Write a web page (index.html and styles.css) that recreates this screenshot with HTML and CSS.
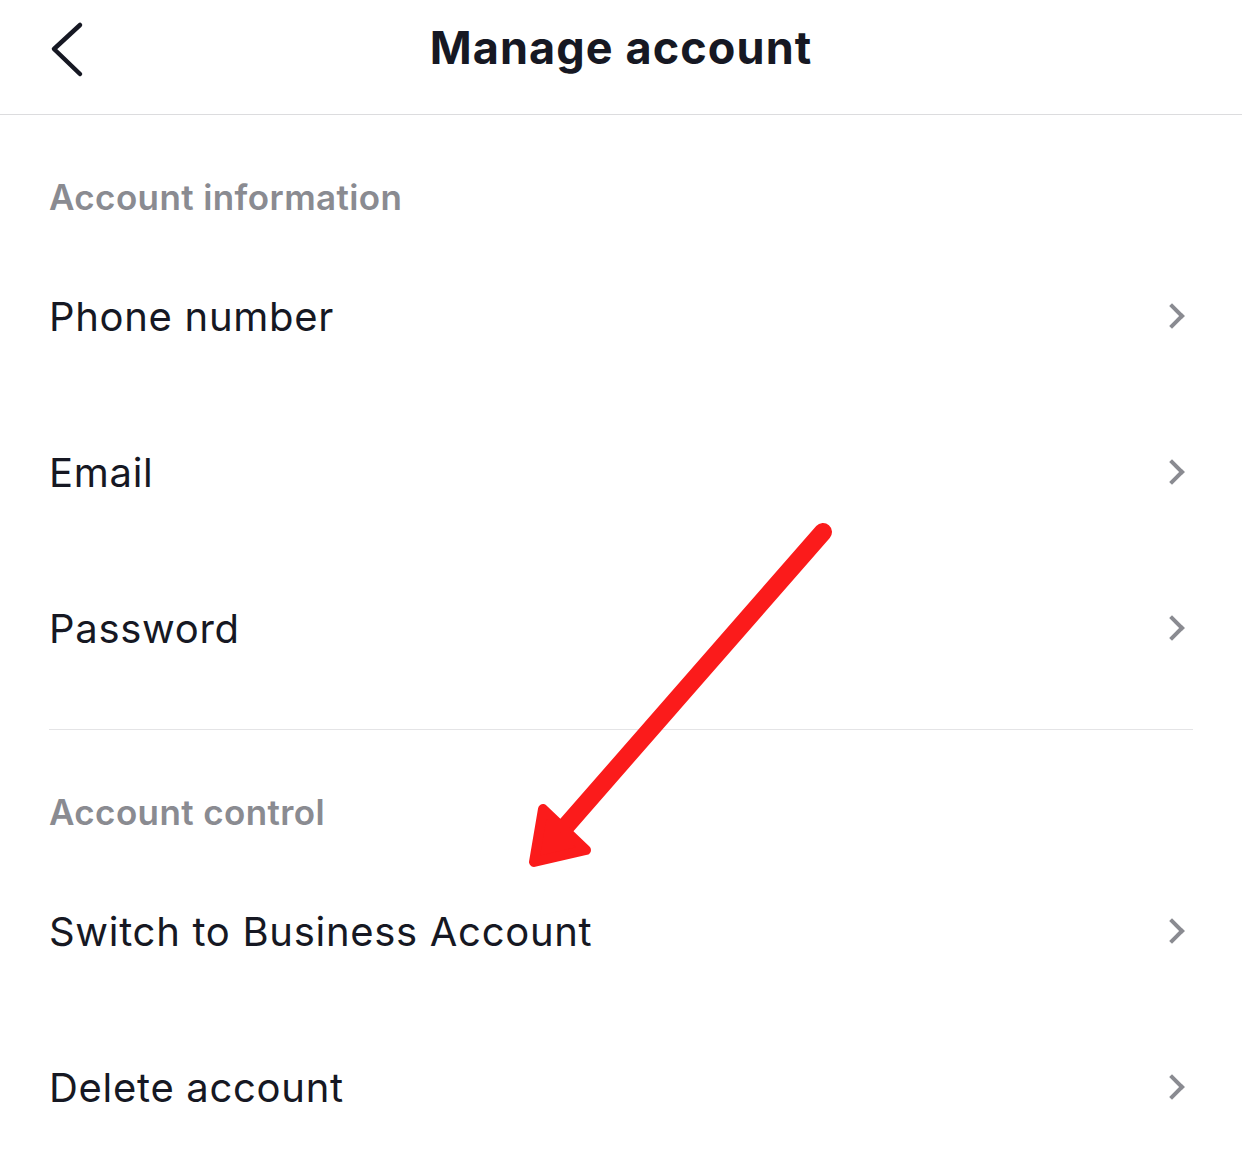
FILE: index.html
```html
<!DOCTYPE html>
<html lang="en">
<head>
    <meta charset="UTF-8">
    <meta name="viewport" content="width=device-width, initial-scale=1.0">
    <title>Manage account</title>
    <link rel="stylesheet" href="styles.css">
</head>
<body>
    <header class="topbar">
        <button class="back" aria-label="Back">
            <svg width="40" height="60" viewBox="0 0 40 60">
                <polyline points="32,6 6,30 32,55" fill="none" stroke="#161823" stroke-width="4.5" stroke-linecap="round" stroke-linejoin="round"/>
            </svg>
        </button>
        <h1>Manage account</h1>
    </header>

    <section class="group">
        <h2>Account information</h2>
        <div class="row"><span>Phone number</span><i class="chev"></i></div>
        <div class="row"><span>Email</span><i class="chev"></i></div>
        <div class="row"><span>Password</span><i class="chev"></i></div>
    </section>

    <section class="group last">
        <h2>Account control</h2>
        <div class="row"><span>Switch to Business Account</span><i class="chev"></i></div>
        <div class="row"><span>Delete account</span><i class="chev"></i></div>
    </section>

    <!-- annotation arrow drawn over the list -->
    <svg class="arrow" width="1242" height="1154" viewBox="0 0 1242 1154">
        <line x1="823" y1="532" x2="566" y2="826" stroke="#fb1b1b" stroke-width="18" stroke-linecap="round"/>
        <polygon points="534,862 543,809 586,850" fill="#fb1b1b" stroke="#fb1b1b" stroke-width="10" stroke-linejoin="round"/>
    </svg>
</body>
</html>
```

FILE: styles.css
```css
body {
    margin: 0;
    font-family: Inter, "Noto Sans", sans-serif;
    background-color: #fff;
    color: #161823;
    position: relative;
    overflow: hidden;
}
.topbar {
    height: 114px;
    border-bottom: 1px solid #dcdcde;
    display: flex;
    justify-content: center;
    position: relative;
}
.topbar h1 {
    margin: 0;
    padding-top: 23px;
    line-height: 50px;
    font-size: 45px;
    font-weight: 700;
    letter-spacing: 1.1px;
}
.back {
    position: absolute;
    left: 48px;
    top: 19px;
    border: none;
    background: none;
    padding: 0;
}
.group {
    margin: 0 49px;
    padding-bottom: 23px;
    border-bottom: 1px solid #e4e4e6;
}
.group.last {
    border-bottom: none;
}
.group h2 {
    margin: 0 0 19px;
    padding-top: 60px;
    height: 44px;
    line-height: 44px;
    font-size: 35px;
    font-weight: 600;
    letter-spacing: 0.4px;
    color: #8a8b91;
}
.row {
    height: 156px;
    display: flex;
    align-items: center;
    justify-content: space-between;
    font-size: 40px;
    letter-spacing: 0.7px;
}
.chev {
    width: 14px;
    height: 14px;
    border-top: 4px solid #8a8b91;
    border-right: 4px solid #8a8b91;
    transform: rotate(45deg);
    margin-right: 12px;
}
.arrow {
    position: absolute;
    left: 0;
    top: 0;
    pointer-events: none;
}
```
